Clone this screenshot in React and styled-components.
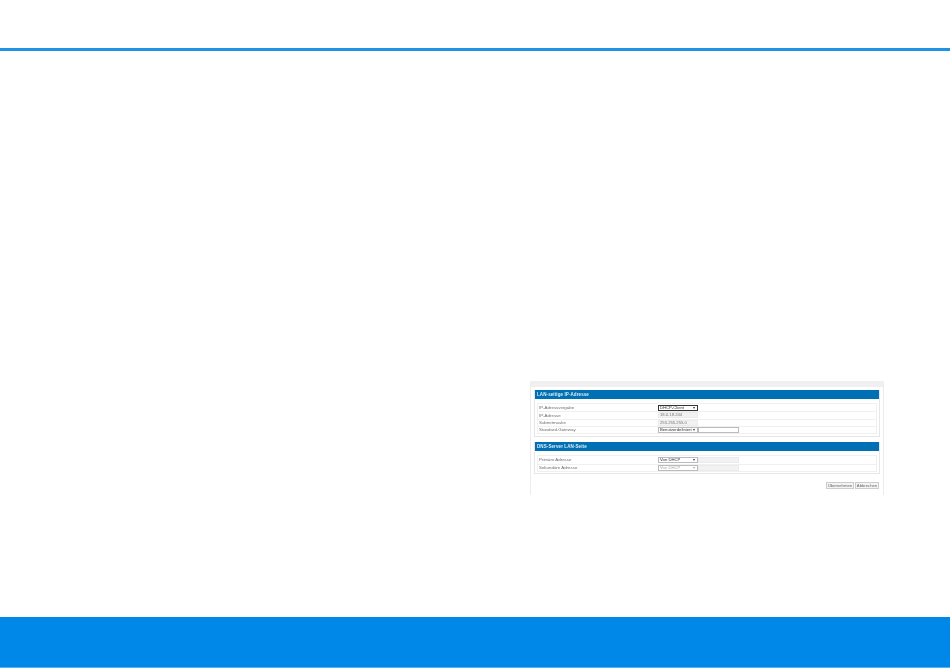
import React from "react";
import styled, { createGlobalStyle } from "styled-components";

const GlobalStyle = createGlobalStyle`
  html, body {
    margin: 0;
    padding: 0;
    background: #fff;
    overflow: hidden;
  }
`;

const Page = styled.div`
  width: 950px;
  height: 668px;
  display: flex;
  flex-direction: column;
`;

const TopBar = styled.header`
  height: 48px;
  flex: none;
  border-bottom: 3px solid #1f93e6;
`;

const Main = styled.main`
  flex: 1;
  padding: 330px 0 0 530px;
`;

const Footer = styled.footer`
  height: 50px;
  flex: none;
  background: #0088e8;
  border-bottom: 1px solid #58b0ee;
`;

const Shot = styled.div`
  width: 354px;
  height: 114px;
  box-sizing: border-box;
  border-top: 6px solid #f0f0f0;
  border-left: 1px solid #ececec;
  border-right: 1px solid #ececec;
  padding: 3px 3px 0;
  font-family: "Liberation Sans", Arial, sans-serif;
  filter: blur(0.45px);
`;

const Card = styled.section`
  margin-bottom: 5px;
  border: 1px solid #e6e6e6;
  border-top: 0;
  padding-bottom: ${(p) => p.$pad}px;
`;

const CardTitle = styled.h2`
  margin: 0 0 4px;
  height: 9px;
  padding-left: 2px;
  background: #0070b4;
  color: #dcebf5;
  font-size: 4.5px;
  font-weight: 700;
  letter-spacing: 0.1px;
  line-height: 9px;
`;

const Rows = styled.div`
  margin: 0 2px;
  border: 1px solid #f0f0f0;
`;

const Row = styled.div`
  display: grid;
  grid-template-columns: 119px 40px 41px;
  height: ${(p) => p.$h}px;
  align-items: center;
  padding-left: 1px;
  border-top: ${(p) => (p.$first ? "0" : "1px solid #f0f0f0")};
  box-sizing: border-box;
`;

const Label = styled.span`
  color: #6e6e6e;
  font-size: 4.4px;
  white-space: nowrap;
`;

const Select = styled.div`
  height: 6px;
  box-sizing: border-box;
  border: ${(p) => (p.$focus ? "1px solid #333" : "1px solid #bbb")};
  background: #fff;
  color: ${(p) => (p.$off ? "#aaa" : "#333")};
  font-size: 4.2px;
  line-height: 4px;
  padding-left: 1px;
  display: flex;
  justify-content: space-between;
  align-items: center;
  white-space: nowrap;
  overflow: hidden;
  &::after {
    content: "";
    flex: none;
    margin-right: 2px;
    border-left: 1.5px solid transparent;
    border-right: 1.5px solid transparent;
    border-top: 2px solid ${(p) => (p.$off ? "#aaa" : "#333")};
  }
`;

const ReadOnly = styled.div`
  height: 6px;
  box-sizing: border-box;
  background: #f2f2f2;
  border: 1px solid #ebebeb;
  color: #777;
  font-size: 4.2px;
  line-height: 4px;
  padding-left: 1px;
  white-space: nowrap;
`;

const Input = styled.div`
  height: 6px;
  box-sizing: border-box;
  background: ${(p) => (p.$off ? "#f2f2f2" : "#fff")};
  border: 1px solid ${(p) => (p.$off ? "#ebebeb" : "#bbb")};
`;

const Actions = styled.div`
  display: flex;
  justify-content: flex-end;
  gap: 1px;
  margin: 8px 1px 0 0;
`;

const Button = styled.div`
  width: ${(p) => p.$w}px;
  height: 7px;
  box-sizing: border-box;
  border: 1px solid #ccc;
  background: #f4f4f4;
  color: #666;
  font-size: 4.2px;
  line-height: 5px;
  text-align: center;
  white-space: nowrap;
`;

const App = () => {
  return (
    <Page>
      <GlobalStyle />
      <TopBar />
      <Main>
        <Shot>
          <Card $pad={2}>
            <CardTitle>LAN-seitige IP-Adresse</CardTitle>
            <Rows>
              <Row $first $h={7.25}>
                <Label>IP-Adressvergabe</Label>
                <Select $focus>DHCP-Client</Select>
              </Row>
              <Row $h={7.25}>
                <Label>IP-Adresse</Label>
                <ReadOnly>18.0.18.244</ReadOnly>
              </Row>
              <Row $h={7.25}>
                <Label>Subnetmaske</Label>
                <ReadOnly>255.255.255.0</ReadOnly>
              </Row>
              <Row $h={7.25}>
                <Label>Standard-Gateway</Label>
                <Select>Benutzerdefiniert</Select>
                <Input />
              </Row>
            </Rows>
          </Card>
          <Card $pad={1}>
            <CardTitle>DNS-Server LAN-Seite</CardTitle>
            <Rows>
              <Row $first $h={7.5}>
                <Label>Primäre Adresse</Label>
                <Select>Von DHCP</Select>
                <Input $off />
              </Row>
              <Row $h={7.5}>
                <Label>Sekundäre Adresse</Label>
                <Select $off>Von DHCP</Select>
                <Input $off />
              </Row>
            </Rows>
          </Card>
          <Actions>
            <Button $w={28}>Übernehmen</Button>
            <Button $w={24}>Abbrechen</Button>
          </Actions>
        </Shot>
      </Main>
      <Footer />
    </Page>
  );
};

export default App;
